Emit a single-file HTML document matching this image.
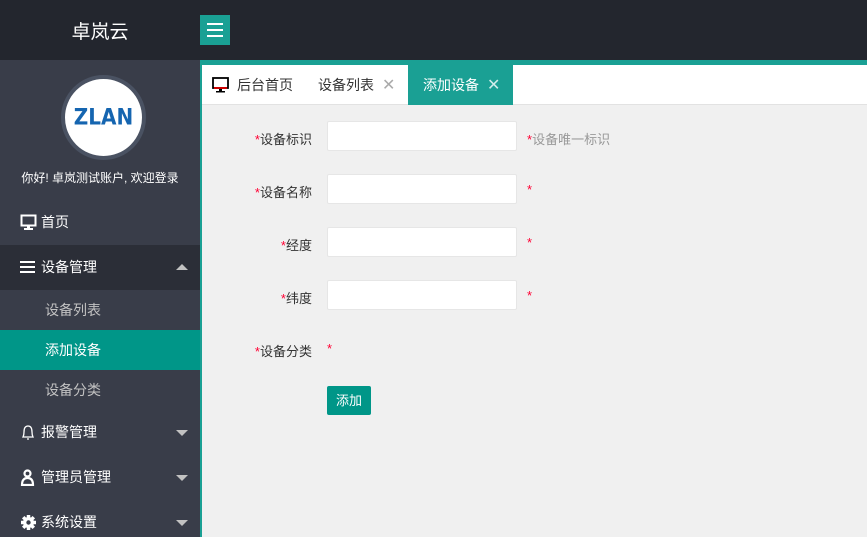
<!DOCTYPE html>
<html><head><meta charset="utf-8"><style>
*{margin:0;padding:0;box-sizing:border-box}
html,body{width:867px;height:537px;overflow:hidden}
body{background:#f0f0f0;font-family:"Liberation Sans","Noto Sans CJK SC",sans-serif;font-size:13px;position:relative}
.hdr{position:absolute;left:0;top:0;width:867px;height:60px;background:#23262e}
.logo{position:absolute;left:0;width:200px;top:17px;text-align:center;color:#fff;font-size:19px}
.hb{position:absolute;left:200px;top:15px;width:30px;height:30px;background:#1aa094}
.hb i{position:absolute;left:7px;width:16px;height:2px;background:#fff}
.side{position:absolute;left:0;top:60px;width:200px;height:477px;background:#393d49;color:#fff}
.circ{position:absolute;left:61px;top:75px;width:85px;height:85px;border-radius:50%;background:#fff;border:4px solid #4a5262}
.circ span{position:absolute;left:0;right:0;top:26px;text-align:center;color:#1565b0;font-weight:bold;font-size:20px;letter-spacing:0px;font-family:"DejaVu Sans",sans-serif;transform:scaleY(1.1)}
.greet{position:absolute;top:169px;width:200px;text-align:center;font-size:12px;color:#fff}
.mi{position:absolute;left:0;width:200px;height:45px;line-height:45px;padding-left:41px;font-size:14px}
.sub{position:absolute;left:0;width:200px;height:40px;line-height:40px;padding-left:45px;font-size:14px;color:#c2c2c2}
.ic{position:absolute;left:20px;top:14px}
.ar{position:absolute;right:12px;top:20px;width:0;height:0;border-left:6px solid transparent;border-right:6px solid transparent;border-top:6px solid #c2c2c2}
.ar.up{border-top:none;border-bottom:6px solid #c2c2c2;top:19px}
.tl{position:absolute;left:200px;top:60px;width:667px;height:5px;background:#1aa094}
.ll{position:absolute;left:200px;top:60px;width:2px;height:477px;background:#1aa094}
.tabs{position:absolute;left:202px;top:65px;width:665px;height:40px;background:#fff;border-bottom:1px solid #e2e2e2}
.tab{position:absolute;top:0;height:40px;line-height:40px;font-size:14px;color:#333}
.x{color:#aaa;font-size:16px;margin-left:8px}
.lab{position:absolute;width:100px;left:212px;text-align:right;font-size:13px;color:#333}
.hint{position:absolute;left:527px;font-size:13px;color:#999}
.r,.hint.r{color:#f03}
.inp{position:absolute;left:327px;width:190px;height:30px;background:#fff;border:1px solid #e6e6e6;border-radius:2px}
.btn{position:absolute;left:327px;top:386px;width:44px;height:29px;background:#009688;color:#fff;text-align:center;line-height:29px;border-radius:2px;font-size:13px}
</style></head><body>
<div class="hdr"><div class="logo">卓岚云</div><div class="hb"><i style="top:8px"></i><i style="top:14px"></i><i style="top:20px"></i></div></div>
<div class="side">
<div class="circ" style="top:15px"><span>ZLAN</span></div>
<div class="greet" style="top:109px">你好! 卓岚测试账户, 欢迎登录</div>
<div class="mi" style="top:140px"><svg class="ic" width="17" height="17" viewBox="0 0 17 17"><rect x="1.5" y="1.5" width="14" height="10" fill="none" stroke="#fff" stroke-width="2"/><rect x="7" y="12" width="3" height="2" fill="#fff"/><rect x="4" y="14" width="9" height="2" fill="#fff"/></svg>首页</div>
<div class="mi" style="top:185px;background:#2b2e37"><svg class="ic" width="16" height="16" viewBox="0 0 16 16"><rect y="2" width="15" height="2" fill="#fff"/><rect y="7" width="15" height="2" fill="#fff"/><rect y="12" width="15" height="2" fill="#fff"/></svg>设备管理<span class="ar up"></span></div>
<div class="sub" style="top:230px">设备列表</div>
<div class="sub" style="top:270px;background:#009688;color:#fff">添加设备</div>
<div class="sub" style="top:310px">设备分类</div>
<div class="mi" style="top:350px"><svg class="ic" width="16" height="17" viewBox="0 0 16 17"><path d="M3 13 Q4 11 4 8 Q4 2 8 2 Q12 2 12 8 Q12 11 13 13 Z M7 15 H9" fill="none" stroke="#fff" stroke-width="1.3"/></svg>报警管理<span class="ar"></span></div>
<div class="mi" style="top:395px"><svg class="ic" width="16" height="17" viewBox="0 0 16 17"><circle cx="7.5" cy="4.5" r="3" fill="none" stroke="#fff" stroke-width="2.2"/><path d="M2 16 Q2 9 7.5 9 Q13 9 13 16 Z" fill="none" stroke="#fff" stroke-width="2.2"/></svg>管理员管理<span class="ar"></span></div>
<div class="mi" style="top:440px"><svg class="ic" width="17" height="17" viewBox="0 0 17 17"><circle cx="8.5" cy="8.5" r="5.5" fill="#fff"/><g stroke="#fff" stroke-width="3.5"><line x1="8.5" y1="1" x2="8.5" y2="16"/><line x1="1" y1="8.5" x2="16" y2="8.5"/><line x1="3.2" y1="3.2" x2="13.8" y2="13.8"/><line x1="13.8" y1="3.2" x2="3.2" y2="13.8"/></g><circle cx="8.5" cy="8.5" r="2.2" fill="#393d49"/></svg>系统设置<span class="ar"></span></div>
</div>
<div class="tl"></div><div class="ll"></div>
<div class="tabs">
<div class="tab" style="left:10px"><svg style="vertical-align:-3px;margin-right:8px" width="17" height="16" viewBox="0 0 17 16"><rect x="1" y="1" width="15" height="10" fill="none" stroke="#000" stroke-width="1.8"/><rect x="2" y="10" width="13" height="2" fill="#c00"/><rect x="7" y="12" width="3" height="2" fill="#000"/><rect x="4" y="14" width="9" height="1.5" fill="#000"/></svg>后台首页</div>
<div class="tab" style="left:116px">设备列表<span class="x">✕</span></div>
<div class="tab" style="left:206px;width:105px;background:#1aa094;color:#fff;padding-left:15px">添加设备<span class="x" style="color:#d0ecea">✕</span></div>
</div>
<div class="lab" style="top:129px"><span class="r">*</span>设备标识</div><div class="inp" style="top:121px"></div><div class="hint" style="top:129px"><span class="r">*</span>设备唯一标识</div>
<div class="lab" style="top:182px"><span class="r">*</span>设备名称</div><div class="inp" style="top:174px"></div><div class="hint r" style="top:182px">*</div>
<div class="lab" style="top:235px"><span class="r">*</span>经度</div><div class="inp" style="top:227px"></div><div class="hint r" style="top:235px">*</div>
<div class="lab" style="top:288px"><span class="r">*</span>纬度</div><div class="inp" style="top:280px"></div><div class="hint r" style="top:288px">*</div>
<div class="lab" style="top:341px"><span class="r">*</span>设备分类</div><div class="hint r" style="top:341px;left:327px">*</div>
<div class="btn">添加</div>
</body></html>
